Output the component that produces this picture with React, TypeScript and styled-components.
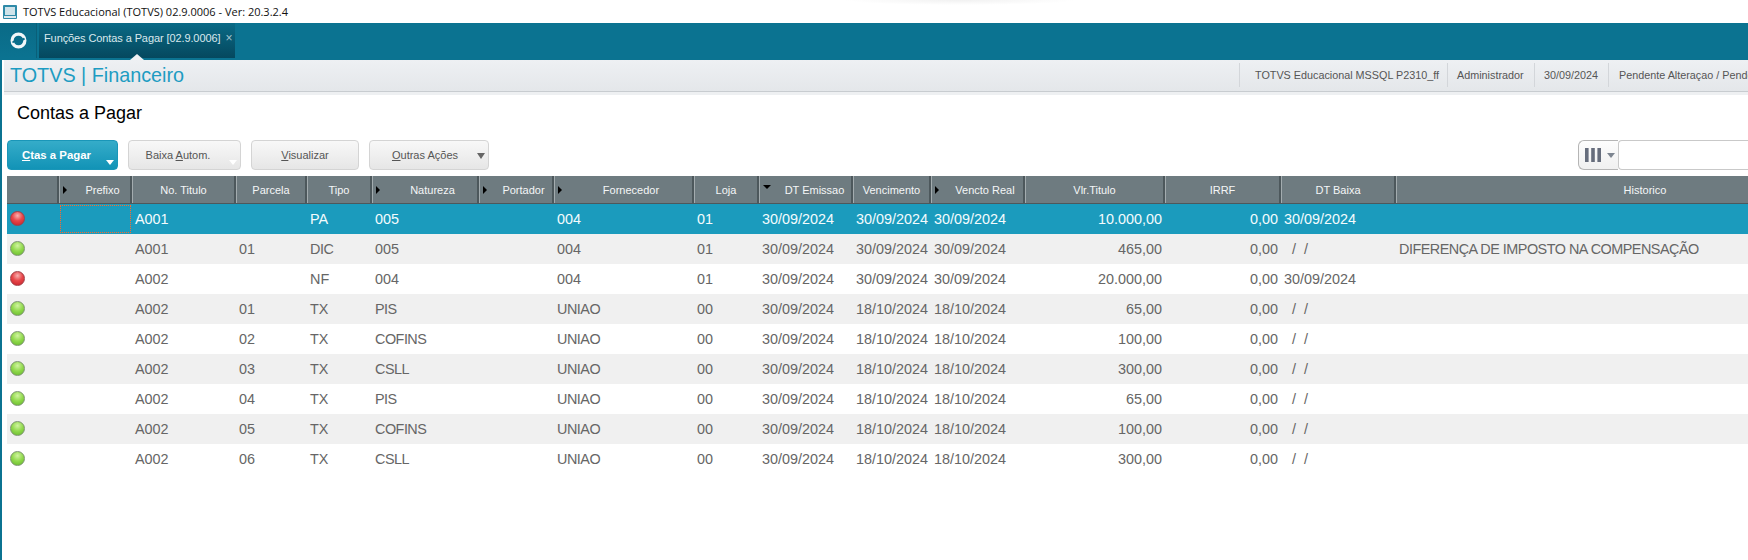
import React from "react";
import styled, { createGlobalStyle } from "styled-components";

const Global = createGlobalStyle`
  html, body { margin: 0; padding: 0; background: #fff; overflow: hidden; }
  body { font-family: "Liberation Sans", Arial, sans-serif; }
`;

const COLS = "52px 73px 104px 71px 65px 107px 75px 140px 65px 94px 78px 94px 140px 116px 115px 499px";

const Page = styled.div`
  width: 1748px;
  height: 560px;
  overflow: hidden;
  display: flex;
  flex-direction: column;
  background: #fff;
`;
const TitleBar = styled.div`
  height: 23px;
  display: flex;
  align-items: center;
  gap: 6px;
  padding-left: 3px;
  background: radial-gradient(ellipse 115px 5px at 960px 0, #f1f1f1, transparent) #fff;
  color: #111;
  font: 11px "Open Sans", "Noto Sans", sans-serif;
  flex: none;
`;
const Shell = styled.div`
  flex: 1;
  display: flex;
  flex-direction: column;
  border-left: 2px solid #0b7391;
  min-height: 0;
`;
const TabBar = styled.div`
  height: 37px;
  margin-left: -2px;
  display: flex;
  background: #0b7391;
  flex: none;
`;
const HomeButton = styled.div`
  width: 37px;
  height: 35px;
  margin-right: 2px;
  display: flex;
  align-items: center;
  justify-content: center;
  background: linear-gradient(#0a6a86, #0b7391);
  border-right: 1px solid #0a5f78;
  box-sizing: border-box;
`;
const Tab = styled.div`
  position: relative;
  width: 196px;
  height: 35px;
  display: flex;
  align-items: flex-start;
  padding: 8px 0 0 5px;
  box-sizing: border-box;
  color: #d9e9ee;
  font-size: 11px;
  letter-spacing: -0.1px;
  line-height: 14px;
  white-space: nowrap;
  background: linear-gradient(#0a6a86, #05485e);
`;
const TabClose = styled.span`
  margin-left: 5px;
  color: #a6c6d0;
  font-size: 12px;
`;
const TabPointer = styled.span`
  position: absolute;
  left: 91px;
  bottom: -2px;
  width: 0;
  height: 0;
  border-left: 7px solid transparent;
  border-right: 7px solid transparent;
  border-bottom: 6px solid #f0f2f4;
`;
const ModuleBar = styled.div`
  height: 32px;
  margin-left: 2px;
  display: flex;
  align-items: center;
  justify-content: space-between;
  box-sizing: border-box;
  border-bottom: 1px solid #c8ccd0;
  background: linear-gradient(#eef0f3, #e4e7ea);
  flex: none;
`;
const ModuleName = styled.div`
  padding-left: 6px;
  color: #1d9cc2;
  font-size: 19.8px;
  white-space: nowrap;
`;
const InfoList = styled.div`
  display: flex;
  height: 24px;
  width: 509px;
  overflow: hidden;
  flex: none;
  align-self: center;
  margin-top: -1px;
`;
const InfoItem = styled.div<{ $w: number; $pad: number }>`
  width: ${(p) => p.$w}px;
  flex: none;
  box-sizing: border-box;
  border-left: 1px solid #d3d6da;
  padding-left: ${(p) => p.$pad}px;
  color: #555;
  font-size: 10.8px;
  line-height: 24px;
  white-space: nowrap;
`;
const Strip = styled.div`
  height: 3px;
  margin-left: 2px;
  background: #eef0f2;
  flex: none;
`;
const Body = styled.div`
  flex: 1;
  padding-left: 5px;
  min-height: 0;
  background: #fff;
`;
const PageTitle = styled.h1`
  margin: 0;
  height: 45px;
  box-sizing: border-box;
  padding: 7px 0 0 10px;
  color: #000;
  font-size: 18px;
  font-weight: 400;
  line-height: 22px;
`;
const Toolbar = styled.div`
  height: 30px;
  display: flex;
  gap: 10px;
  margin-bottom: 6px;
`;
const ActionButton = styled.div<{ $primary?: boolean; $w: number; $shift?: number }>`
  position: relative;
  width: ${(p) => p.$w}px;
  height: 30px;
  box-sizing: border-box;
  display: flex;
  align-items: center;
  justify-content: center;
  border-radius: 4px;
  border: 1px solid ${(p) => (p.$primary ? "#1a96b8" : "#d4d4d4")};
  background: ${(p) =>
    p.$primary ? "linear-gradient(#35acc9, #1293b6)" : "linear-gradient(#f8f8f8, #e6e6e6)"};
  color: ${(p) => (p.$primary ? "#fff" : "#555")};
  font-size: ${(p) => (p.$primary ? 11.4 : 11)}px;
  font-weight: ${(p) => (p.$primary ? 700 : 400)};
  padding-right: ${(p) => p.$shift ?? 0}px;
  white-space: nowrap;
`;
const ButtonArrow = styled.span<{ $color: string }>`
  position: absolute;
  right: 3px;
  bottom: 4px;
  width: 0;
  height: 0;
  border-left: 4.5px solid transparent;
  border-right: 4.5px solid transparent;
  border-top: 5px solid ${(p) => p.$color};
`;
const MenuArrow = styled.span`
  position: absolute;
  right: 3px;
  top: 12px;
  width: 0;
  height: 0;
  border-left: 4px solid transparent;
  border-right: 4px solid transparent;
  border-top: 6px solid #666;
`;
const SearchGroup = styled.div`
  margin-left: auto;
  display: flex;
  width: 170px;
  flex: none;
`;
const ColumnPicker = styled.div`
  width: 40px;
  height: 30px;
  box-sizing: border-box;
  border: 1px solid #b5b5b5;
  border-right: 0;
  border-radius: 6px 0 0 6px;
  background: linear-gradient(#fdfdfd, #f0f0f0);
  display: flex;
  align-items: center;
  gap: 6px;
  padding-left: 6px;
`;
const SearchInput = styled.div`
  flex: 1;
  height: 30px;
  box-sizing: border-box;
  border: 1px solid #c9c9c9;
  border-right: 0;
  border-radius: 4px 0 0 4px;
  background: #fff;
`;
const Grid = styled.div`
  width: 1889px;
`;
const HeadRow = styled.div`
  display: grid;
  grid-template-columns: ${COLS};
  height: 28px;
  background: #6e7b80;
`;
const HeadCell = styled.div`
  display: flex;
  align-items: center;
  box-sizing: border-box;
  border-right: 1px solid #4d585c;
  box-shadow: inset -1px 0 0 #4d585c, 1px 0 0 #a3acaf;
  color: #f4f6f7;
  font-size: 11px;
  height: 28px;
  border-bottom: 1px solid #4d585c;
`;
const HeadLabel = styled.span`
  flex: 1;
  text-align: center;
  white-space: nowrap;
`;
const SortMark = styled.span<{ $down?: boolean }>`
  flex: none;
  width: 0;
  height: 0;
  margin: 0 ${(p) => (p.$down ? 6 : 7)}px 0 4px;
  ${(p) =>
    p.$down
      ? "border-left: 4px solid transparent; border-right: 4px solid transparent; border-top: 4px solid #000; margin-top: -6px;"
      : "border-top: 4px solid transparent; border-bottom: 4px solid transparent; border-left: 4px solid #000; margin-top: 0;"}
`;
const Row = styled.div<{ $state: "selected" | "odd" | "even" }>`
  display: grid;
  grid-template-columns: ${COLS};
  height: 30px;
  align-items: center;
  background: ${(p) =>
    p.$state === "selected" ? "#1b9bbd" : p.$state === "odd" ? "#f0f0f0" : "#fff"};
  color: ${(p) => (p.$state === "selected" ? "#f4fbfd" : "#666")};
  font-size: 14.4px;
`;
const Cell = styled.div<{ $right?: boolean; $tight?: boolean }>`
  height: 28px;
  line-height: 28px;
  box-sizing: border-box;
  padding: 0 3px;
  white-space: pre;
  overflow: hidden;
  letter-spacing: ${(p) => (p.$tight ? "-0.5px" : "normal")};
  text-align: ${(p) => (p.$right ? "right" : "left")};
`;
const FocusCell = styled(Cell)`
  margin-left: 1px;
  margin-right: 1px;
  border: 1px dotted #ff6a2a;
`;
const Bullet = styled.span<{ $red?: boolean }>`
  display: block;
  width: 15px;
  height: 15px;
  margin: -1px 0 0 3px;
  border-radius: 50%;
  box-sizing: border-box;
  border: 1px solid ${(p) => (p.$red ? "#a04048" : "#7d9470")};
  background: ${(p) =>
    p.$red
      ? "radial-gradient(circle at 50% 28%, #f8b0b0 0, #e8474a 45%, #c41f28 100%)"
      : "radial-gradient(circle at 50% 28%, #d0f4a0 0, #8fd84a 50%, #62b52a 100%)"};
`;

const headers: [string, "right" | "down" | null][] = [
  ["", null],
  ["Prefixo", "right"],
  ["No. Titulo", null],
  ["Parcela", null],
  ["Tipo", null],
  ["Natureza", "right"],
  ["Portador", "right"],
  ["Fornecedor", "right"],
  ["Loja", null],
  ["DT Emissao", "down"],
  ["Vencimento", null],
  ["Vencto Real", "right"],
  ["Vlr.Titulo", null],
  ["IRRF", null],
  ["DT Baixa", null],
  ["Historico", null],
];

type R = {
  red?: boolean; t: string; p: string; ty: string; n: string; f: string; l: string;
  e: string; v: string; r: string; val: string; b: string; h?: string;
};
const E = "30/09/2024";
const O = "18/10/2024";
const NB = "  /  /";
const rows: R[] = [
  { red: true, t: "A001", p: "", ty: "PA", n: "005", f: "004", l: "01", e: E, v: E, r: E, val: "10.000,00", b: E },
  { t: "A001", p: "01", ty: "DIC", n: "005", f: "004", l: "01", e: E, v: E, r: E, val: "465,00", b: NB, h: "DIFERENÇA DE IMPOSTO NA COMPENSAÇÃO" },
  { red: true, t: "A002", p: "", ty: "NF", n: "004", f: "004", l: "01", e: E, v: E, r: E, val: "20.000,00", b: E },
  { t: "A002", p: "01", ty: "TX", n: "PIS", f: "UNIAO", l: "00", e: E, v: O, r: O, val: "65,00", b: NB },
  { t: "A002", p: "02", ty: "TX", n: "COFINS", f: "UNIAO", l: "00", e: E, v: O, r: O, val: "100,00", b: NB },
  { t: "A002", p: "03", ty: "TX", n: "CSLL", f: "UNIAO", l: "00", e: E, v: O, r: O, val: "300,00", b: NB },
  { t: "A002", p: "04", ty: "TX", n: "PIS", f: "UNIAO", l: "00", e: E, v: O, r: O, val: "65,00", b: NB },
  { t: "A002", p: "05", ty: "TX", n: "COFINS", f: "UNIAO", l: "00", e: E, v: O, r: O, val: "100,00", b: NB },
  { t: "A002", p: "06", ty: "TX", n: "CSLL", f: "UNIAO", l: "00", e: E, v: O, r: O, val: "300,00", b: NB },
];

const isCaps = (s: string) => /[A-Z]{3}/.test(s);

const AppIcon = () => (
  <svg width="14" height="14" viewBox="0 0 14 14">
    <rect x="0" y="0" width="14" height="14" rx="1" fill="#2f8aa8" />
    <rect x="2" y="2" width="10" height="8" fill="#cfe3ea" />
    <rect x="1" y="11" width="12" height="2" fill="#dfe9ee" />
  </svg>
);
const TotvsLogo = () => (
  <svg width="17" height="17" viewBox="0 0 17 17">
    <circle cx="8.5" cy="8.5" r="6.4" fill="none" stroke="#f2f7f9" strokeWidth="3.2" />
    <path d="M2.5 10.5 C6 6.5 10 11 14.5 6.5" fill="none" stroke="#0b6c89" strokeWidth="1.8" />
  </svg>
);
const ColumnsIcon = () => (
  <svg width="16" height="14" viewBox="0 0 16 14">
    <rect x="0" y="0" width="3.6" height="14" fill="#666d7c" />
    <rect x="6.2" y="0" width="3.6" height="14" fill="#666d7c" />
    <rect x="12.4" y="0" width="3.6" height="14" fill="#666d7c" />
  </svg>
);
const CaretIcon = () => (
  <svg width="8" height="5" viewBox="0 0 8 5">
    <path d="M0 0h8L4 5z" fill="#7d8590" />
  </svg>
);

export default function App() {
  return (
    <Page>
      <Global />
      <TitleBar>
        <AppIcon />
        <span>TOTVS Educacional (TOTVS) 02.9.0006 - Ver: 20.3.2.4</span>
      </TitleBar>
      <Shell>
        <TabBar>
          <HomeButton>
            <TotvsLogo />
          </HomeButton>
          <Tab>
            Funções Contas a Pagar [02.9.0006]
            <TabClose>×</TabClose>
            <TabPointer />
          </Tab>
        </TabBar>
        <ModuleBar>
          <ModuleName>TOTVS | Financeiro</ModuleName>
          <InfoList>
            <InfoItem $w={208} $pad={15}>TOTVS Educacional MSSQL P2310_ff</InfoItem>
            <InfoItem $w={87} $pad={9}>Administrador</InfoItem>
            <InfoItem $w={74} $pad={9}>30/09/2024</InfoItem>
            <InfoItem $w={140} $pad={10}>Pendente Alteraçao / Pendente</InfoItem>
          </InfoList>
        </ModuleBar>
        <Strip />
        <Body>
          <PageTitle>Contas a Pagar</PageTitle>
          <Toolbar>
            <ActionButton $primary $w={111} $shift={12}>
              <span><u>C</u>tas a Pagar</span>
              <ButtonArrow $color="#fff" />
            </ActionButton>
            <ActionButton $w={113} $shift={13}>
              <span>Baixa <u>A</u>utom.</span>
              <ButtonArrow $color="#fff" />
            </ActionButton>
            <ActionButton $w={108}>
              <span><u>V</u>isualizar</span>
            </ActionButton>
            <ActionButton $w={120} $shift={8}>
              <span><u>O</u>utras Ações</span>
              <MenuArrow />
            </ActionButton>
            <SearchGroup>
              <ColumnPicker>
                <ColumnsIcon />
                <CaretIcon />
              </ColumnPicker>
              <SearchInput />
            </SearchGroup>
          </Toolbar>
          <Grid>
            <HeadRow>
              {headers.map(([label, mark], i) => (
                <HeadCell key={i}>
                  {mark && <SortMark $down={mark === "down"} />}
                  <HeadLabel>{label}</HeadLabel>
                </HeadCell>
              ))}
            </HeadRow>
            {rows.map((r, i) => (
              <Row key={i} $state={i === 0 ? "selected" : i % 2 ? "odd" : "even"}>
                <Bullet $red={r.red} />
                {i === 0 ? <FocusCell /> : <Cell />}
                <Cell>{r.t}</Cell>
                <Cell>{r.p}</Cell>
                <Cell $tight={isCaps(r.ty)}>{r.ty}</Cell>
                <Cell $tight={isCaps(r.n)}>{r.n}</Cell>
                <Cell />
                <Cell $tight={isCaps(r.f)}>{r.f}</Cell>
                <Cell>{r.l}</Cell>
                <Cell>{r.e}</Cell>
                <Cell>{r.v}</Cell>
                <Cell>{r.r}</Cell>
                <Cell $right>{r.val}</Cell>
                <Cell $right>0,00</Cell>
                <Cell>{r.b}</Cell>
                <Cell $tight>{r.h}</Cell>
              </Row>
            ))}
          </Grid>
        </Body>
      </Shell>
    </Page>
  );
}
